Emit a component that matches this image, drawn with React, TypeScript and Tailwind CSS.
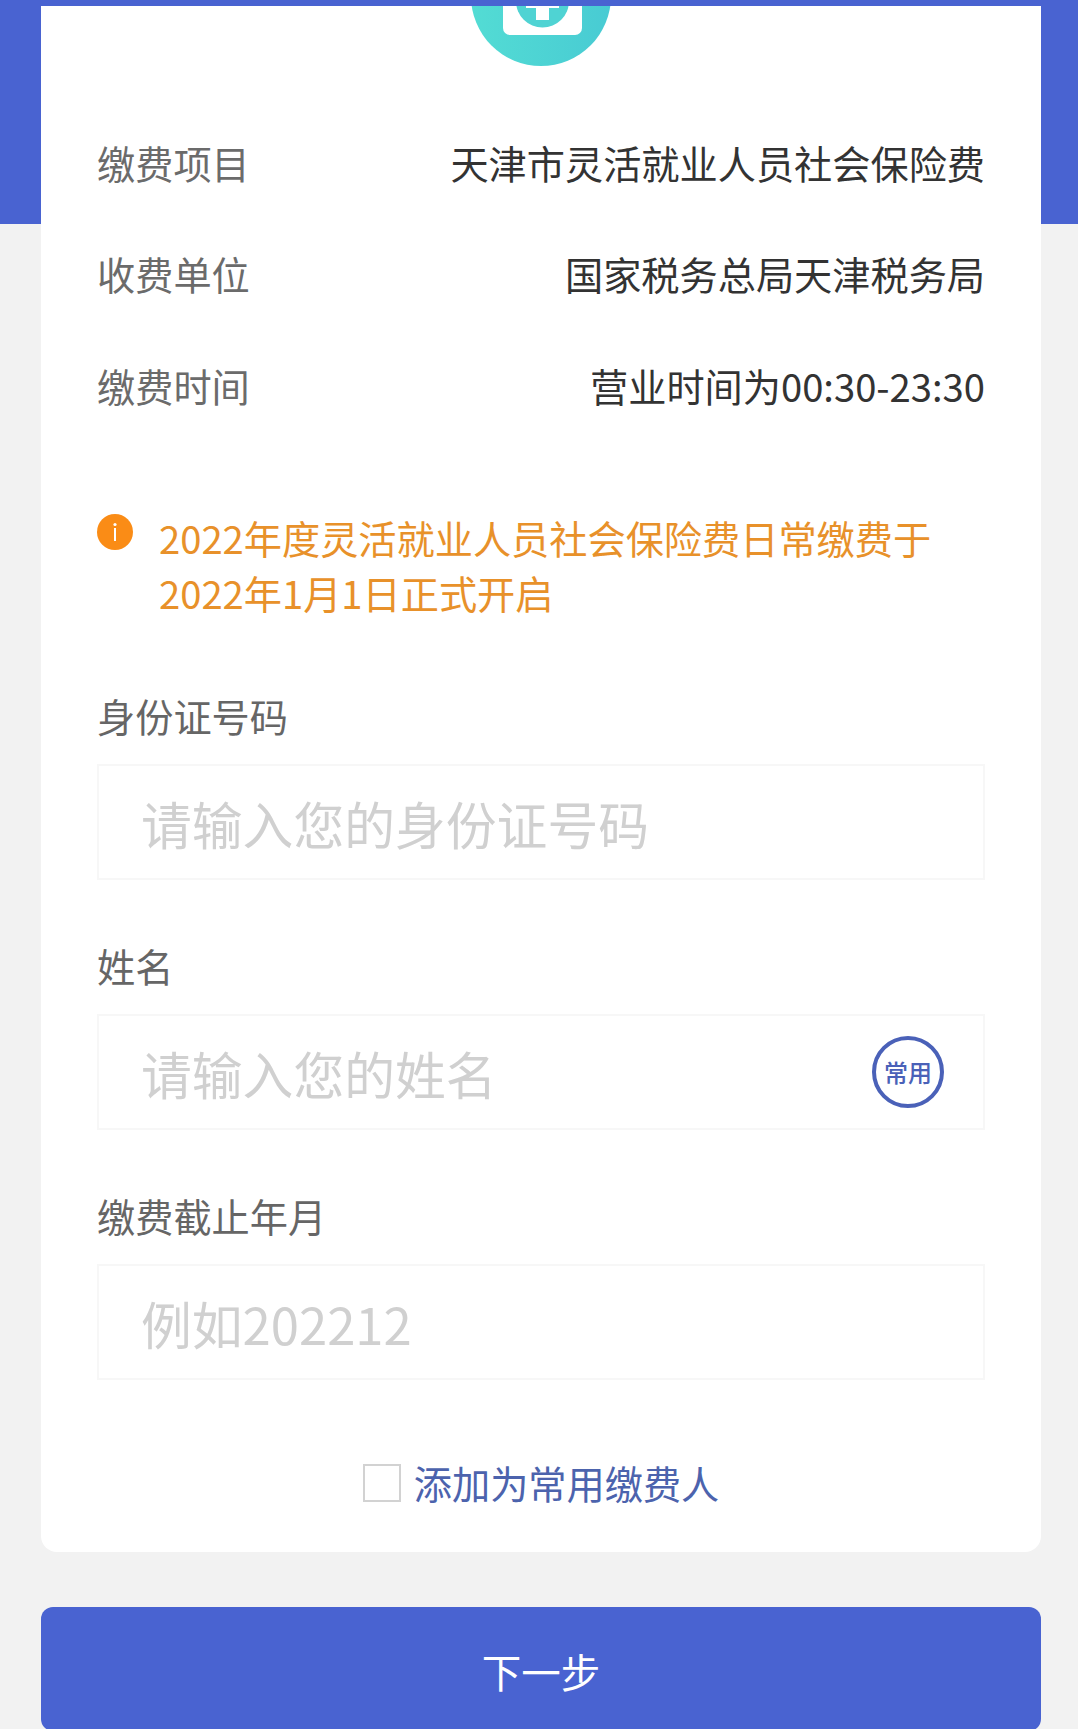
import type { ReactNode } from "react";

type InfoRowProps = {
  label: string;
  value: string;
};

type FieldProps = {
  label: string;
  placeholder: string;
  children?: ReactNode;
};

const infoRows: InfoRowProps[] = [
  { label: "缴费项目", value: "天津市灵活就业人员社会保险费" },
  { label: "收费单位", value: "国家税务总局天津税务局" },
  { label: "缴费时间", value: "营业时间为00:30-23:30" },
];

function InsuranceLogo() {
  return (
    <svg width="140" height="60" viewBox="0 0 140 60" className="block">
      <defs>
        <linearGradient id="logo" x1="0" y1="0" x2="1" y2="0">
          <stop offset="0" stopColor="#53dcd4" />
          <stop offset="1" stopColor="#48cbd3" />
        </linearGradient>
      </defs>
      <circle cx="70" cy="-10" r="70" fill="url(#logo)" />
      <rect x="32" y="-40" width="79" height="69" rx="7" fill="#fff" />
      <circle cx="71.5" cy="-5" r="26.5" fill="#4fd3d3" />
      <path d="M65 -20h13v17h10v5h-10v12h-13v-12h-10v-5h10z" fill="#fff" />
    </svg>
  );
}

function InfoRow({ label, value }: InfoRowProps) {
  return (
    <div className="flex h-[111.4px] items-center justify-between">
      <span className="text-[#6b6b6b]">{label}</span>
      <span className="text-[#333]">{value}</span>
    </div>
  );
}

function Field({ label, placeholder, children }: FieldProps) {
  return (
    <div className="h-[250px]">
      <div className="flex h-[75px] items-start leading-[54px] text-[#666]">{label}</div>
      <div className="flex h-[116px] items-center justify-between border-2 border-[#f7f7f7] pr-[39px] pl-[42px]">
        <span className="pt-[3px] text-[50.8px] leading-none text-[#d0d0d0]">{placeholder}</span>
        {children}
      </div>
    </div>
  );
}

export default function App() {
  return (
    <div className="h-[1729px] overflow-hidden bg-[#f2f2f2] bg-[linear-gradient(#4963d1,#4963d1)] bg-[length:100%_224px] bg-no-repeat px-[41px] pt-[6px] pr-[37px] font-['Noto_Sans_CJK_SC',sans-serif] text-[38.2px]">
      <div className="h-[1546px] rounded-b-2xl bg-white px-[56px]">
        <div className="flex h-[101px] justify-center">
          <InsuranceLogo />
        </div>

        {infoRows.map((row) => (
          <InfoRow key={row.label} {...row} />
        ))}

        {/* Notice */}
        <div className="mt-[69px] flex text-[#e8912a]">
          <span className="mt-[4px] flex h-[36px] w-[36px] shrink-0 items-center justify-center rounded-full bg-[#fa8c16]">
            <svg width="6" height="20" viewBox="0 0 6 20" fill="#fff">
              <circle cx="3" cy="2.5" r="1.6" />
              <rect x="2" y="6" width="2" height="13" />
            </svg>
          </span>
          <p className="ml-[26px] leading-[55px]">
            2022年度灵活就业人员社会保险费日常缴费于
            <br />
            2022年1月1日正式开启
          </p>
        </div>

        <div className="mt-[68.8px]">
          <Field label="身份证号码" placeholder="请输入您的身份证号码" />
          <Field label="姓名" placeholder="请输入您的姓名">
            <span className="flex h-[72px] w-[72px] items-center justify-center rounded-full border-4 border-[#4a61b8] text-2xl font-medium text-[#4a61b8]">
              常用
            </span>
          </Field>
          <Field label="缴费截止年月" placeholder="例如202212" />
        </div>

        <label className="mt-[16px] flex items-center justify-center">
          <span className="mr-[13px] h-[38px] w-[38px] border-2 border-[#d2d2d2]" />
          <span className="leading-[56px] text-[#4c63ad]">添加为常用缴费人</span>
        </label>
      </div>

      <button className="mt-[55px] flex h-[124px] w-full items-center justify-center rounded-xl bg-[#4963d1] pt-1 text-[39.5px] text-white">
        下一步
      </button>
    </div>
  );
}
